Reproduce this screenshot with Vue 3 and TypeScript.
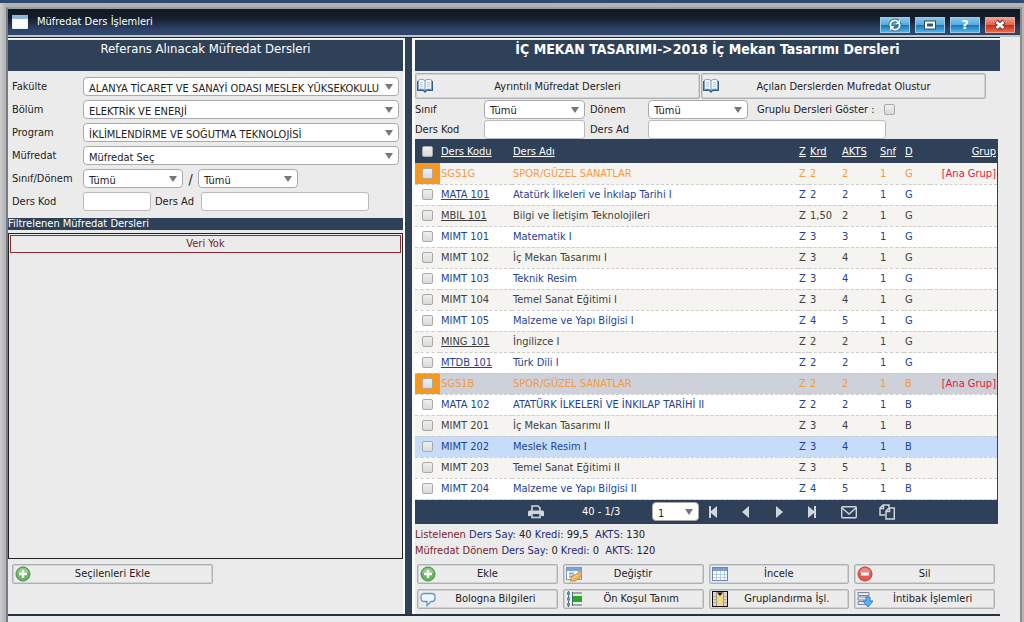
<script setup lang="ts">
import { ref } from 'vue'

interface Course {
  code: string
  name: string
  credit: string
  akts: number
  term: string
  link?: boolean
  group?: boolean
  state?: 'muted' | 'hover'
}

const courses: Course[] = [
  { code: 'SGS1G', name: 'SPOR/GÜZEL SANATLAR', credit: '2', akts: 2, term: 'G', group: true },
  { code: 'MATA 101', name: 'Atatürk İlkeleri ve İnkılap Tarihi I', credit: '2', akts: 2, term: 'G', link: true },
  { code: 'MBIL 101', name: 'Bilgi ve İletişim Teknolojileri', credit: '1,50', akts: 2, term: 'G', link: true },
  { code: 'MIMT 101', name: 'Matematik I', credit: '3', akts: 3, term: 'G' },
  { code: 'MIMT 102', name: 'İç Mekan Tasarımı I', credit: '3', akts: 4, term: 'G' },
  { code: 'MIMT 103', name: 'Teknik Resim', credit: '3', akts: 4, term: 'G' },
  { code: 'MIMT 104', name: 'Temel Sanat Eğitimi I', credit: '3', akts: 4, term: 'G' },
  { code: 'MIMT 105', name: 'Malzeme ve Yapı Bilgisi I', credit: '4', akts: 5, term: 'G' },
  { code: 'MING 101', name: 'İngilizce I', credit: '2', akts: 2, term: 'G', link: true },
  { code: 'MTDB 101', name: 'Türk Dili I', credit: '2', akts: 2, term: 'G', link: true },
  { code: 'SGS1B', name: 'SPOR/GÜZEL SANATLAR', credit: '2', akts: 2, term: 'B', group: true, state: 'muted' },
  { code: 'MATA 102', name: 'ATATÜRK İLKELERİ VE İNKILAP TARİHİ II', credit: '2', akts: 2, term: 'B' },
  { code: 'MIMT 201', name: 'İç Mekan Tasarımı II', credit: '3', akts: 4, term: 'B' },
  { code: 'MIMT 202', name: 'Meslek Resim I', credit: '3', akts: 4, term: 'B', state: 'hover' },
  { code: 'MIMT 203', name: 'Temel Sanat Eğitimi II', credit: '3', akts: 5, term: 'B' },
  { code: 'MIMT 204', name: 'Malzeme ve Yapı Bilgisi II', credit: '4', akts: 5, term: 'B' },
]

const filters = [
  { id: 'fakulte', label: 'Fakülte', value: 'ALANYA TİCARET VE SANAYİ ODASI MESLEK YÜKSEKOKULU' },
  { id: 'bolum', label: 'Bölüm', value: 'ELEKTRİK VE ENERJİ' },
  { id: 'program', label: 'Program', value: 'İKLİMLENDİRME VE SOĞUTMA TEKNOLOJİSİ' },
  { id: 'mufredat', label: 'Müfredat', value: 'Müfredat Seç' },
]

const actions = [
  { label: 'Ekle', icon: 'add' },
  { label: 'Değiştir', icon: 'edit' },
  { label: 'İncele', icon: 'grid' },
  { label: 'Sil', icon: 'remove' },
  { label: 'Bologna Bilgileri', icon: 'bubble', wide: true },
  { label: 'Ön Koşul Tanım', icon: 'tree', wide: true },
  { label: 'Gruplandırma İşl.', icon: 'column', wide: true },
  { label: 'İntibak İşlemleri', icon: 'server', wide: true },
]

const showGrouped = ref(false)
</script>

<template>
  <div class="desktop">
    <main class="window">
      <header class="titlebar">
        <svg class="app-icon" viewBox="0 0 16 14" aria-hidden="true">
          <rect x="0" y="0" width="16" height="14" rx="1" fill="#e9f0f8" />
          <rect x="0" y="0" width="16" height="4" rx="1" fill="#8fb4dd" />
          <rect x="1" y="4" width="14" height="9" fill="#fbfcfe" />
        </svg>
        <h1>Müfredat Ders İşlemleri</h1>
        <div class="win-buttons">
          <button type="button" aria-label="Yenile">
            <svg viewBox="0 0 30 16">
              <circle cx="15" cy="8" r="4.500" fill="none" stroke="#40698c" stroke-width="4" />
              <path d="M10.500 9a4.500 4.500 0 0 1 7.500-4.300M19.500 7a4.500 4.500 0 0 1-7.500 4.300" fill="none" stroke="#fff" stroke-width="1.800" />
              <path d="M20 2.500v4.500h-4.500zM10 13.500V9h4.500z" fill="#fff" />
            </svg>
          </button>
          <button type="button" aria-label="Büyüt">
            <svg viewBox="0 0 30 16">
              <rect x="11" y="5.500" width="8" height="5" fill="none" stroke="#2b4b68" stroke-width="4" />
              <rect x="11" y="5.500" width="8" height="5" fill="#35566f" stroke="#fff" stroke-width="2" />
            </svg>
          </button>
          <button type="button" aria-label="Yardım"><span class="question">?</span></button>
          <button type="button" class="close" aria-label="Kapat">
            <svg viewBox="0 0 30 16">
              <path d="M11 4.500l8 7M19 4.500l-8 7" stroke="#73453f" stroke-width="5" />
              <path d="M11.500 5l7 6M18.500 5l-7 6" stroke="#fff" stroke-width="2.500" />
            </svg>
          </button>
        </div>
      </header>

      <div class="panels">
        <section class="panel left">
          <h2>Referans Alınacak Müfredat Dersleri</h2>
          <form class="filter" @submit.prevent>
            <div v-for="f in filters" :key="f.id" class="row">
              <label :for="f.id">{{ f.label }}</label>
              <span class="select grow">
                <select :id="f.id"><option>{{ f.value }}</option></select>
              </span>
            </div>
            <div class="row">
              <label for="sinif">Sınıf/Dönem</label>
              <span class="select small"><select id="sinif"><option>Tümü</option></select></span>
              <span class="slash">/</span>
              <span class="select small"><select id="donem" aria-label="Dönem"><option>Tümü</option></select></span>
            </div>
            <div class="row">
              <label for="kod">Ders Kod</label>
              <input id="kod" class="code-input" type="text">
              <label for="ad" class="name-label">Ders Ad</label>
              <input id="ad" class="name-input" type="text">
            </div>
          </form>
          <h3>Filtrelenen Müfredat Dersleri</h3>
          <div class="results"><p>Veri Yok</p></div>
          <div class="left-actions">
            <button type="button" class="btn">
              <svg class="icon" viewBox="0 0 16 16"><circle cx="8" cy="8" r="7" fill="#66b563" stroke="#4a8d48" /><path d="M2.500 7a5.500 5 0 0 1 11 0z" fill="#91cd88" /><path d="M8 4v8M4 8h8" stroke="#fff" stroke-width="2.500" /></svg>
              <span>Seçilenleri Ekle</span>
            </button>
          </div>
        </section>

        <div class="divider"></div>

        <section class="panel right">
          <h2 class="strong">İÇ MEKAN TASARIMI-&gt;2018 İç Mekan Tasarımı Dersleri</h2>
          <div class="top-buttons">
            <button v-for="t in ['Ayrıntılı Müfredat Dersleri', 'Açılan Derslerden Mufredat Olustur']" :key="t" type="button" class="btn">
              <svg class="icon" viewBox="0 0 16 16">
                <path d="M0 3h16v10H10l-2 2-2-2H0z" fill="#315f8d" />
                <path d="M1.500 2C4 1 6.500 1.300 8 2.500 9.500 1.300 12 1 14.500 2v9.500C12 10.800 9.500 11 8 12.300 6.500 11 4 10.800 1.500 11.500z" fill="#f2f6fa" stroke="#7f9fbd" />
                <path d="M8 2.500v10" stroke="#7897b4" />
                <path d="M3 4.500h3M3 6.500h3M3 8.500h3M10 4.500h3M10 6.500h3M10 8.500h3" stroke="#b9cada" />
              </svg>
              <span>{{ t }}</span>
            </button>
          </div>
          <form class="search" @submit.prevent>
            <label for="r-sinif">Sınıf</label>
            <span class="select"><select id="r-sinif"><option>Tümü</option></select></span>
            <label for="r-donem" class="inner">Dönem</label>
            <span class="select small"><select id="r-donem"><option>Tümü</option></select></span>
            <span class="check-pair">
              <label for="grouped">Gruplu Dersleri Göster :</label>
              <input id="grouped" v-model="showGrouped" type="checkbox">
            </span>
            <label for="r-kod">Ders Kod</label>
            <input id="r-kod" type="text">
            <label for="r-ad" class="inner">Ders Ad</label>
            <input id="r-ad" class="wide" type="text">
          </form>

          <div class="table-box">
            <table>
              <colgroup>
                <col class="c-check"><col class="c-code"><col><col class="c-z"><col class="c-krd"><col class="c-akts"><col class="c-snf"><col class="c-d"><col class="c-grup">
              </colgroup>
              <thead>
                <tr>
                  <th><input type="checkbox" aria-label="Tümünü seç"></th>
                  <th><a href="#">Ders Kodu</a></th>
                  <th><a href="#">Ders Adı</a></th>
                  <th><a href="#">Z</a></th>
                  <th><a href="#">Krd</a></th>
                  <th><a href="#">AKTS</a></th>
                  <th><a href="#">Snf</a></th>
                  <th><a href="#">D</a></th>
                  <th class="end"><a href="#">Grup</a></th>
                </tr>
              </thead>
              <tbody>
                <tr v-for="c in courses" :key="c.code" :class="[c.state, { group: c.group }]">
                  <td><input type="checkbox" :aria-label="c.code"></td>
                  <td><a v-if="c.link" href="#">{{ c.code }}</a><template v-else>{{ c.code }}</template></td>
                  <td>{{ c.name }}</td>
                  <td>Z</td>
                  <td>{{ c.credit }}</td>
                  <td>{{ c.akts }}</td>
                  <td>1</td>
                  <td>{{ c.term }}</td>
                  <td class="end">{{ c.group ? '[Ana Grup]' : '' }}</td>
                </tr>
              </tbody>
            </table>
            <nav class="pager" aria-label="Sayfalama">
              <button type="button" aria-label="Yazdır">
                <svg viewBox="0 0 16 16"><path d="M4 7V2h6l2 2v3" fill="none" stroke="#cfd6de" stroke-width="1.600" /><path d="M0 8q0-1.500 1.500-1.500h13Q16 6.500 16 8v4h-3v-2H3v2H0z" fill="#cfd6de" /><path d="M4 10v3.500h8V10" fill="none" stroke="#cfd6de" stroke-width="1.600" /></svg>
              </button>
              <span class="count">40 - 1/3</span>
              <span class="select page"><select aria-label="Sayfa"><option>1</option></select></span>
              <span class="steps">
                <button type="button" aria-label="İlk"><svg viewBox="0 0 16 16"><path d="M4 2h2v5l6-5v12L6 9v5H4z" fill="#cfd6de" /></svg></button>
                <button type="button" aria-label="Önceki"><svg viewBox="0 0 16 16"><path d="M11 2v12L4 8z" fill="#cfd6de" /></svg></button>
                <button type="button" aria-label="Sonraki"><svg viewBox="0 0 16 16"><path d="M5 2v12l7-6z" fill="#cfd6de" /></svg></button>
                <button type="button" aria-label="Son"><svg viewBox="0 0 16 16"><path d="M12 2h-2v5L4 2v12l6-5v5h2z" fill="#cfd6de" /></svg></button>
              </span>
              <span class="tools">
                <button type="button" aria-label="E-posta"><svg viewBox="0 0 16 16"><rect x="0.700" y="2.700" width="14.600" height="11" rx="1" fill="none" stroke="#cfd6de" stroke-width="1.400" /><path d="M1 4l7 6 7-6" fill="none" stroke="#cfd6de" stroke-width="1.400" /></svg></button>
                <button type="button" aria-label="Kopyala"><svg viewBox="0 0 16 16"><path d="M6 11H1V4l3-3h6v3M1 4.500h3.500V1M7 7l3-3h5.300v11H7zM7 7.500h3.500V4" fill="none" stroke="#cfd6de" stroke-width="1.500" /></svg></button>
              </span>
            </nav>
          </div>

          <div class="totals">
            <p><span class="name">Listelenen</span> Ders Say: <b>40</b> Kredi: <b>99,5</b> &nbsp;AKTS: <b>130</b></p>
            <p><span class="name">Müfredat Dönem</span> Ders Say: <b>0</b> Kredi: <b>0</b> &nbsp;AKTS: <b>120</b></p>
          </div>

          <div class="actions">
            <button v-for="a in actions" :key="a.label" type="button" class="btn" :class="{ wide: a.wide }">
              <svg class="icon" viewBox="0 0 16 16">
                <template v-if="a.icon === 'add'">
                  <circle cx="8" cy="8" r="7" fill="#66b563" stroke="#4a8d48" /><path d="M2.500 7a5.500 5 0 0 1 11 0z" fill="#91cd88" /><path d="M8 4v8M4 8h8" stroke="#fff" stroke-width="2.500" />
                </template>
                <template v-else-if="a.icon === 'edit'">
                  <rect x="0.500" y="1.500" width="15" height="12" fill="#fff" stroke="#7897c4" /><path d="M1 2h14v3H1z" fill="#7da4da" /><path d="M3 7.500h5M3 10.500h3" stroke="#86a9d8" stroke-width="2" /><path d="M4 15l2-5 5-2 2-3 3 2-2 5-5 3z" fill="#eeb660" stroke="#c68c3d" /><path d="M6 13l5-4" stroke="#ffe0a0" />
                </template>
                <template v-else-if="a.icon === 'grid'">
                  <rect x="0.500" y="1.500" width="15" height="13" fill="#fff" stroke="#6687b8" /><path d="M1 2h14v3H1z" fill="#7b9fd0" /><path d="M1 8.500h14M1 11.500h14M4.500 5v9M8.500 5v9M12.500 5v9" stroke="#b3c9e4" />
                </template>
                <template v-else-if="a.icon === 'remove'">
                  <circle cx="8" cy="8" r="7" fill="#e45c50" stroke="#bb3f39" /><path d="M2.500 7a5.500 5 0 0 1 11 0z" fill="#ee877a" /><path d="M4 8h8" stroke="#fff" stroke-width="3" />
                </template>
                <template v-else-if="a.icon === 'bubble'">
                  <path d="M4 2.500h8q3 0 3 3v2q0 3-3 3h-1l-4 4v-4H4q-3 0-3-3v-2q0-3 3-3z" fill="#eef6fe" stroke="#6a94c8" stroke-width="1.300" />
                </template>
                <template v-else-if="a.icon === 'tree'">
                  <path d="M2.500 0v16M6.500 1v14M6 2h10M6 14h10" fill="none" stroke="#466d68" /><path d="M1 2.500h3M1 8h3M1 13.500h3" stroke="#5c8fab" stroke-width="3" /><path d="M7 5h9v6H7z" fill="#28a72b" />
                </template>
                <template v-else-if="a.icon === 'column'">
                  <rect x="0.500" y="0.500" width="15" height="15" fill="#d8d6ce" stroke="#111" /><path d="M1 5.500h14M1 8.500h14M1 11.500h14" stroke="#b5b1a6" /><rect x="5" y="1" width="6" height="14" fill="#f2d788" /><path d="M4.500 1v14M11.500 1v14" stroke="#99958b" /><path d="M5 1.500h6L8 5z" fill="#111" />
                </template>
                <template v-else>
                  <path d="M1 1.500h11v3H1zM1 6h11v3H1zM1 10.500h11v3H1z" fill="#e5e9ef" stroke="#78879e" /><path d="M9 6h4v4h3l-5 6-5-6h3z" fill="#5bb3f3" stroke="#2f7fc4" />
                </template>
              </svg>
              <span>{{ a.label }}</span>
            </button>
          </div>
        </section>
      </div>
    </main>
  </div>
</template>

<style>
body {
  margin: 0;
  background: #ebebeb;
}
</style>

<style scoped>
* {
  box-sizing: border-box;
}

.desktop {
  min-height: 100vh;
  padding: 4px 2px 0 6px;
  border-top: 3px solid #2f4a70;
  background: linear-gradient(90deg, #cbcbcb, #b2b2b2 6px, #b5b5b5);
  font-family: "DejaVu Sans Condensed", "DejaVu Sans", Tahoma, sans-serif;
  font-size: 11px;
  color: #222;
  display: flex;
}

.window {
  flex: 1;
  min-width: 0;
  background: #ebebeb;
  border-left: 2px solid #747b84;
  border-right: 2px solid #8d8d8d;
  border-top: 2px solid #989da3;
}

.titlebar {
  display: flex;
  align-items: center;
  height: 28px;
  padding: 0 5px 0 4px;
  background: linear-gradient(#101923, #141e2b 35%, #2e446a 80%, #2f4467);
  border-bottom: 2px solid #bcc5d2;
  color: #fff;
}

.app-icon {
  width: 16px;
  height: 14px;
}

h1 {
  margin: 0 auto 0 9px;
  font-size: 11px;
  line-height: 16px;
  font-weight: 400;
}

.win-buttons {
  display: flex;
  gap: 5px;
  padding-top: 6px;
}

.win-buttons button {
  width: 30px;
  height: 16px;
  padding: 0;
  border: 1px solid #9cc9e8;
  background: linear-gradient(#8ac8ec, #58a9dc 48%, #1a76b6 52%, #50b4e8);
  display: flex;
  align-items: center;
  justify-content: center;
}

.win-buttons .close {
  border-color: #eba294;
  background: linear-gradient(#f0a08c, #df6450 48%, #c92d17 52%, #ee6a40);
}

.win-buttons svg {
  width: 30px;
  height: 16px;
  flex: none;
}

.question {
  color: #fff;
  font: bold 13px/14px "DejaVu Sans", sans-serif;
}

.panels {
  display: grid;
  grid-template-columns: minmax(0, 397fr) 7px minmax(0, 588fr);
  margin-right: 20px;
  border-top: 1px solid #1c2738;
  border-bottom: 2px solid #243248;
}

.divider {
  background: #2f4158;
}

.panel {
  display: flex;
  flex-direction: column;
  padding-top: 1px;
  border-right: 2px solid #fafafa;
  border-top: 1px solid #fff;
}

.right {
  border-left: 3px solid #fafafa;
  border-right: 0;
}

h2 {
  margin: 0;
  height: 31px;
  background: #2f4158;
  color: #fff;
  text-align: center;
  font-size: 13px;
  line-height: 18px;
  font-weight: 400;
}

h2.strong {
  font-size: 14px;
  font-weight: 700;
}

.filter {
  padding: 4px 4px 0;
}

.row {
  display: flex;
  align-items: center;
  height: 23px;
}

.row > label:first-child {
  width: 71px;
}

.select {
  position: relative;
  display: block;
}

.select::after {
  content: "";
  position: absolute;
  right: 6px;
  top: 7px;
  border: 4px solid transparent;
  border-top: 6px solid #777;
  border-bottom: 0;
  pointer-events: none;
}

.grow {
  flex: 1;
}

.small {
  width: 100px;
}

select,
input[type="text"] {
  display: block;
  width: 100%;
  height: 19px;
  margin: 0;
  border: 1px solid #aaa;
  border-radius: 4px;
  background: #fff;
  font: inherit;
  color: #222;
}

select {
  appearance: none;
  padding: 3px 18px 0 5px;
}

input[type="text"] {
  border-radius: 3px;
  border-color: #bbb;
}

.slash {
  width: 15px;
  text-align: center;
  font-size: 14px;
}

.row .code-input {
  width: 68px;
}

.name-label {
  width: 50px;
  padding-left: 4px;
}

.row .name-input {
  width: 168px;
}

h3 {
  margin: 5px 0 3px;
  background: #2f4158;
  color: #fff;
  font-size: 11px;
  line-height: 12px;
  font-weight: 400;
}

.results {
  flex: 1;
  padding: 1px;
  border: 1px solid #222;
}

.results p {
  margin: 0;
  border: 1px solid #8b2a35;
  text-align: center;
  line-height: 16px;
  color: #6d1f28;
}

.left-actions {
  padding: 5px 4px 30px;
}

.left-actions .btn {
  width: 201px;
}

.btn {
  display: flex;
  align-items: center;
  height: 20px;
  padding: 0 2px;
  border: 1px solid #aeb1b3;
  border-radius: 2px;
  box-shadow: inset 0 0 0 1px #d0d2d4;
  background: #ececec;
  font: inherit;
  color: #222;
}

.btn span {
  flex: 1;
  padding-right: 16px;
  text-align: center;
}

.btn.wide span {
  padding-right: 0;
}

.icon {
  width: 16px;
  height: 16px;
  flex: none;
}

.top-buttons {
  display: grid;
  grid-template-columns: 1fr 1fr;
  padding: 2px 14px 0 0;
  gap: 1px;
}

.top-buttons .btn {
  height: 26px;
  padding: 0 1px;
}

.search {
  display: grid;
  grid-template-columns: 69px 101px 63px 100px 138px;
  grid-auto-rows: 20px;
  align-items: center;
}

.search .inner {
  padding-left: 5px;
}

.search .wide {
  grid-column: span 2;
}

.check-pair {
  display: flex;
  align-items: center;
  gap: 9px;
  padding-left: 9px;
  white-space: nowrap;
}

input[type="checkbox"] {
  appearance: none;
  display: block;
  width: 11px;
  height: 11px;
  flex: none;
  margin: 0 auto;
  border: 1px solid #a9a9a9;
  border-radius: 2px;
  background: linear-gradient(#f0f0f0, #dadada);
}

.check-pair input[type="checkbox"] {
  margin: 0;
}

.table-box {
  margin-right: 2px;
  border-right: 1px solid #2f4158;
}

table {
  width: 100%;
  table-layout: fixed;
  border-collapse: collapse;
}

.c-check { width: 25px; }
.c-code { width: 72px; }
.c-z { width: 11px; }
.c-krd { width: 32px; }
.c-akts { width: 38px; }
.c-snf { width: 25px; }
.c-d { width: 26px; }
.c-grup { width: 67px; }

th,
td {
  padding: 0 1px;
  text-align: left;
  font-weight: 400;
  white-space: nowrap;
}

th {
  height: 24px;
  background: #2f4158;
  color: #fff;
}

td {
  height: 21px;
  border-bottom: 1px dashed #ccc;
}

th a,
td a {
  color: inherit;
}

.end {
  text-align: right;
}

tbody tr {
  background: #f6f4f1;
  color: #404040;
}

tbody tr:nth-child(even) {
  background: #fff;
  color: #233f96;
}

tbody tr.hover {
  background: #c6dcf9;
}

tbody tr.group {
  color: #f39a45;
}

tbody tr.muted {
  background: #ced1d9;
}

tr.group td:first-child {
  background: #f8971d;
}

tr.group .end {
  color: #e0183c;
}

.pager {
  display: flex;
  align-items: center;
  height: 24px;
  padding-left: 113px;
  background: #2f4158;
  color: #fff;
}

.pager button {
  width: 16px;
  height: 16px;
  padding: 0;
  border: 0;
  background: none;
}

.pager svg {
  display: block;
  width: 16px;
  height: 16px;
}

.count {
  width: 108px;
  padding-left: 38px;
  white-space: nowrap;
}

.page {
  width: 47px;
}

.steps {
  display: flex;
  gap: 17px;
  padding-left: 6px;
}

.tools {
  display: flex;
  gap: 22px;
  padding-left: 21px;
}

.totals {
  padding-top: 3px;
  color: #1c2c78;
}

.totals p {
  margin: 0;
  line-height: 16px;
}

.totals .name {
  color: #7c1d2b;
}

.totals b {
  font-weight: 400;
  color: #222;
}

.actions {
  display: grid;
  grid-template-columns: repeat(4, 1fr);
  gap: 5px;
  padding: 5px 5px 5px 2px;
}
</style>
